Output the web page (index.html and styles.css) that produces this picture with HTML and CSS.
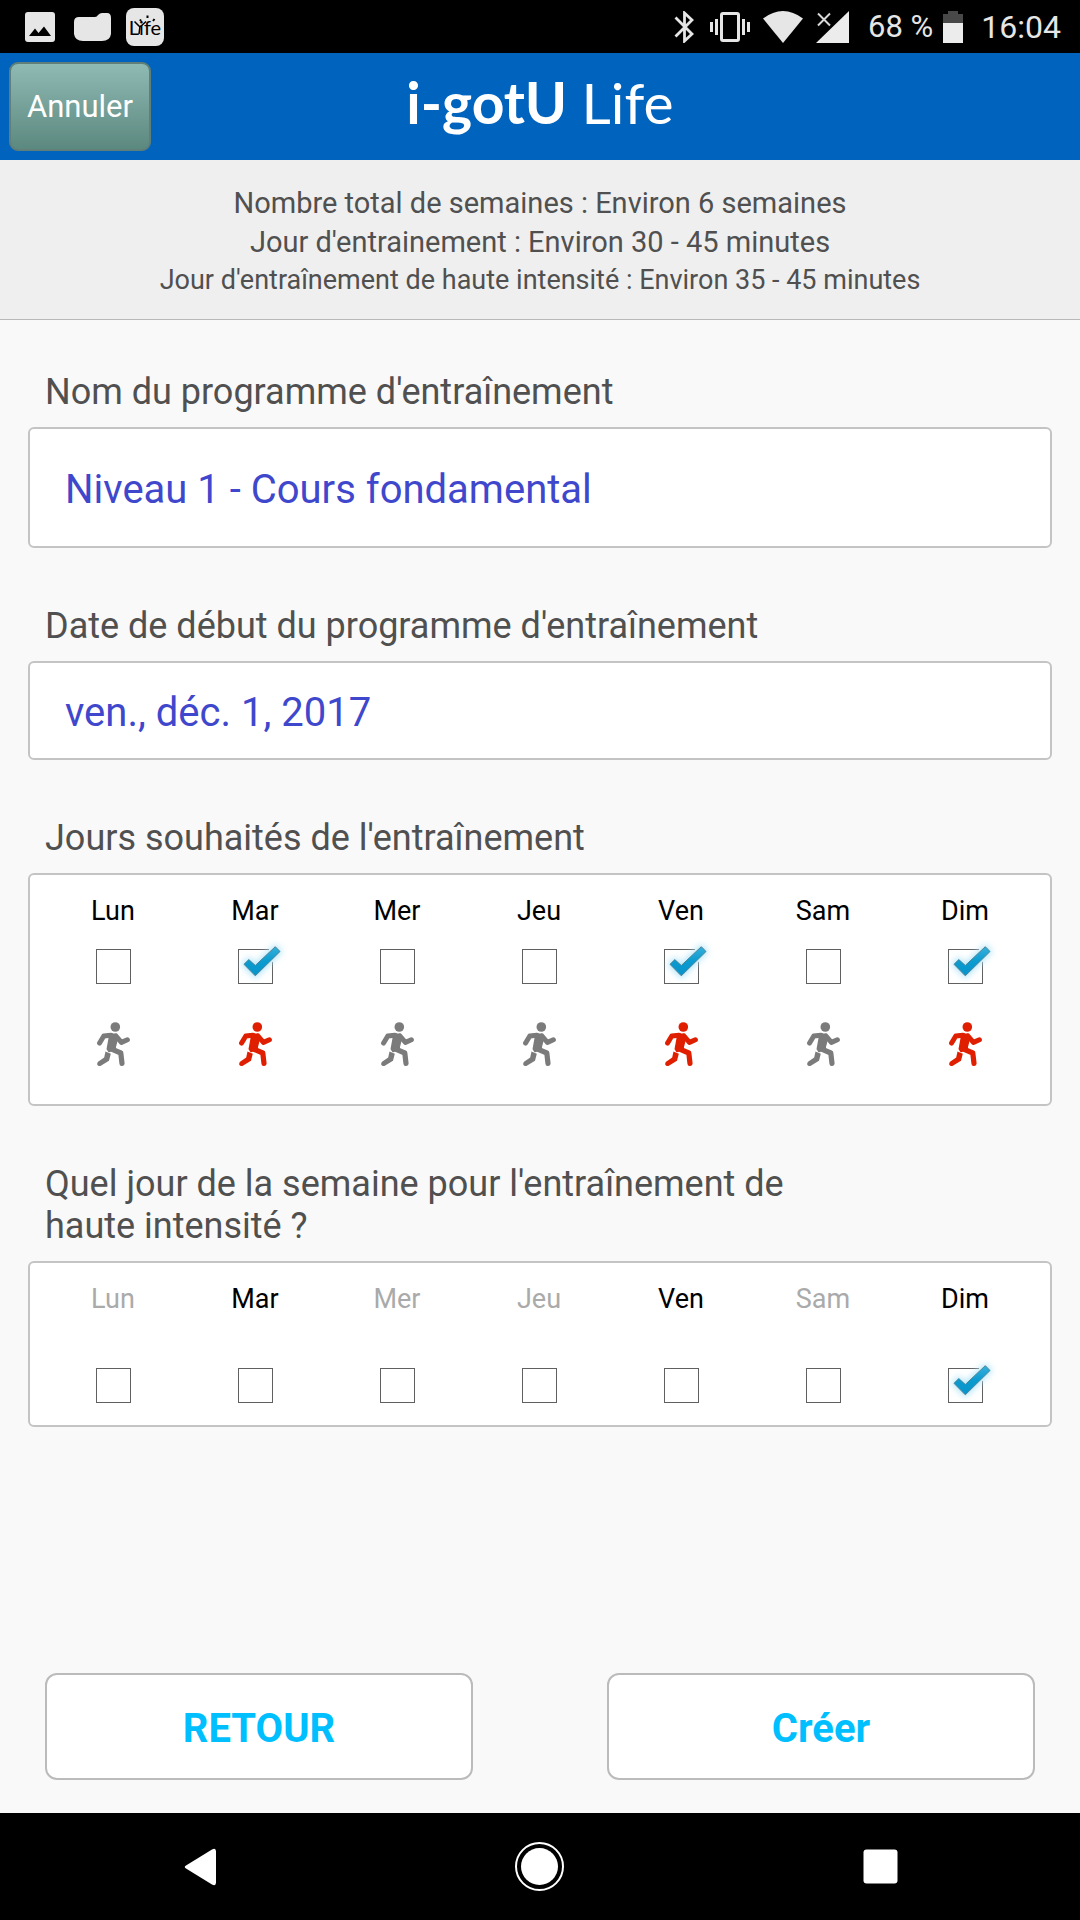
FILE: index.html
```html
<!DOCTYPE html>
<html lang="fr">
<head>
    <meta charset="UTF-8">
    <meta name="viewport" content="width=device-width, initial-scale=1.0">
    <title>i-gotU Life</title>
    <link rel="stylesheet" href="styles.css">
</head>
<body>
    <svg class="symbols" aria-hidden="true">
        <defs>
            <linearGradient id="tick-fill" x1="0" y1="0" x2="0" y2="1">
                <stop offset="0" stop-color="#35b0dc"/>
                <stop offset="0.5" stop-color="#0a9bd0"/>
                <stop offset="1" stop-color="#0893cb"/>
            </linearGradient>
            <filter id="glow" x="-50%" y="-50%" width="200%" height="200%">
                <feGaussianBlur stdDeviation="3"/>
            </filter>
        </defs>
        <symbol id="tick" viewBox="-12 -12 66 52">
            <path d="M31 -2 37 -5 45 2 37 15 31 10z" fill="#fff"/>
            <path d="M6 15.3 10.8 10.6 17.3 16.5 37.3 -2.3 42 2.5 17.3 26.8z" fill="#a8e0f7" stroke="#b9e7f9" stroke-width="4" filter="url(#glow)"/>
            <path d="M6 15.3 10.8 10.6 17.3 16.5 37.3 -2.3 42 2.5 17.3 26.8z" fill="url(#tick-fill)" stroke="#4b8396"/>
        </symbol>
        <symbol id="runner" viewBox="0 0 33 44">
            <circle cx="18.3" cy="5" r="4.8" fill="currentColor"/>
            <path d="M11 12.2 18.500 12.2 21 14.5 18.2 25 18.500 27 12 29.500 10.3 27 12.500 15z" fill="currentColor" stroke="currentColor" stroke-width="1.500" stroke-linejoin="round"/>
            <path d="M2.6 21 6.8 14 14 13.2M19 14 24.4 20.4 30.4 17.8" fill="none" stroke="currentColor" stroke-width="5" stroke-linecap="round" stroke-linejoin="round"/>
            <path d="M13.500 26.6 23.8 31 25 41.4" fill="none" stroke="currentColor" stroke-width="5.2" stroke-linecap="round" stroke-linejoin="round"/>
            <path d="M8.500 29.500 13.8 31.8 12 38.8 3.8 43.8Q1 44.6 .2 42.6 0 40.500 1.4 39.500L7.2 35.4z" fill="currentColor"/>
        </symbol>
    </svg>

    <div class="status-bar">
        <div class="status-group">
            <svg class="icon-picture" width="30" height="30" viewBox="0 0 30 30">
                <rect width="30" height="30" rx="3" fill="#e6e6e6"/>
                <path d="M4 24 10 16.5 13.5 21 19 14.5 26 24z" fill="#000"/>
            </svg>
            <svg width="37" height="28" viewBox="0 0 37 28">
                <path d="M5 4H21Q23 4 24 2 26 0 28 0H33Q37 0 37 5V21Q36 28 28 28H9Q1 28 0 21V9Q0 4 5 4z" fill="#e6e6e6"/>
            </svg>
            <span class="app-badge">Life
                <svg class="badge-rays" width="38" height="38" viewBox="0 0 38 38">
                    <path d="M8.500 13.500 14 19 20 13.500M14 18 13 26" fill="none" stroke="#000" stroke-width="1.500"/>
                    <path d="M14 11.500 15 13M21.500 7.500V10M28.500 11 27 13" stroke="#000" stroke-width="2"/>
                </svg>
            </span>
        </div>
        <div class="status-group status-right">
            <svg class="icon-bluetooth" width="20" height="32" viewBox="0 0 20 32">
                <path d="M1.5 6.5 18 23 10.5 30V2L18 9 1.5 25.5" fill="none" stroke="#e6e6e6" stroke-width="2.8"/>
            </svg>
            <svg class="icon-vibrate" width="40" height="30" viewBox="0 0 40 30">
                <rect x="11.5" y="1.5" width="17" height="27" rx="1.5" fill="none" stroke="#e6e6e6" stroke-width="3"/>
                <path d="M1.5 10V20M6.5 7V23M33.5 7V23M38.5 10V20" stroke="#e6e6e6" stroke-width="3"/>
            </svg>
            <svg width="40" height="32" viewBox="0 0 40 32">
                <path d="M0 7.5Q20 -7.5 40 7.5L20 32z" fill="#e6e6e6"/>
            </svg>
            <svg class="icon-signal" width="33" height="32" viewBox="0 0 33 32">
                <path d="M33 0V32H0z" fill="#ececec"/>
                <path d="M2 2.5 14 14.5M14 2.5 2 14.5" stroke="#d8d8d8" stroke-width="2"/>
            </svg>
            <span class="battery-level">68 %</span>
            <svg class="icon-battery" width="20" height="32" viewBox="0 0 20 32">
                <path d="M5 0H15V3H20V12H0V3H5z" fill="#484848"/>
                <path d="M0 12H20V32H0z" fill="#ececec"/>
            </svg>
            <span class="clock">16:04</span>
        </div>
    </div>

    <header class="app-header">
        <button type="button" class="cancel-btn">Annuler</button>
        <h1 class="logo"><b>i-gotU</b> Life</h1>
    </header>

    <section class="summary">
        <p>Nombre total de semaines : Environ 6 semaines</p>
        <p>Jour d'entrainement : Environ 30 - 45 minutes</p>
        <p class="small">Jour d'entraînement de haute intensité : Environ 35 - 45 minutes</p>
    </section>

    <form class="program-form">
        <div class="field">
            <label class="field-label" for="program-name">Nom du programme d'entraînement</label>
            <input class="box text-input tall" type="text" id="program-name" value="Niveau 1 - Cours fondamental">
        </div>

        <div class="field">
            <label class="field-label" for="start-date">Date de début du programme d'entraînement</label>
            <input class="box text-input" type="text" id="start-date" value="ven., déc. 1, 2017">
        </div>

        <div class="field" role="group" aria-labelledby="days-label">
            <div class="field-label" id="days-label">Jours souhaités de l'entraînement</div>
            <div class="box days">
                <label class="day"><span>Lun</span><span class="check"><input type="checkbox"><svg class="tick"><use href="#tick"/></svg></span><svg class="runner"><use href="#runner"/></svg></label>
                <label class="day"><span>Mar</span><span class="check"><input type="checkbox" checked><svg class="tick"><use href="#tick"/></svg></span><svg class="runner"><use href="#runner"/></svg></label>
                <label class="day"><span>Mer</span><span class="check"><input type="checkbox"><svg class="tick"><use href="#tick"/></svg></span><svg class="runner"><use href="#runner"/></svg></label>
                <label class="day"><span>Jeu</span><span class="check"><input type="checkbox"><svg class="tick"><use href="#tick"/></svg></span><svg class="runner"><use href="#runner"/></svg></label>
                <label class="day"><span>Ven</span><span class="check"><input type="checkbox" checked><svg class="tick"><use href="#tick"/></svg></span><svg class="runner"><use href="#runner"/></svg></label>
                <label class="day"><span>Sam</span><span class="check"><input type="checkbox"><svg class="tick"><use href="#tick"/></svg></span><svg class="runner"><use href="#runner"/></svg></label>
                <label class="day"><span>Dim</span><span class="check"><input type="checkbox" checked><svg class="tick"><use href="#tick"/></svg></span><svg class="runner"><use href="#runner"/></svg></label>
            </div>
        </div>

        <div class="field" role="group" aria-labelledby="intense-label">
            <div class="field-label" id="intense-label">Quel jour de la semaine pour l'entraînement de haute intensité ?</div>
            <div class="box days intense">
                <label class="day off"><span>Lun</span><span class="check"><input type="checkbox" disabled><svg class="tick"><use href="#tick"/></svg></span></label>
                <label class="day"><span>Mar</span><span class="check"><input type="checkbox"><svg class="tick"><use href="#tick"/></svg></span></label>
                <label class="day off"><span>Mer</span><span class="check"><input type="checkbox" disabled><svg class="tick"><use href="#tick"/></svg></span></label>
                <label class="day off"><span>Jeu</span><span class="check"><input type="checkbox" disabled><svg class="tick"><use href="#tick"/></svg></span></label>
                <label class="day"><span>Ven</span><span class="check"><input type="checkbox"><svg class="tick"><use href="#tick"/></svg></span></label>
                <label class="day off"><span>Sam</span><span class="check"><input type="checkbox" disabled><svg class="tick"><use href="#tick"/></svg></span></label>
                <label class="day"><span>Dim</span><span class="check"><input type="checkbox" checked><svg class="tick"><use href="#tick"/></svg></span></label>
            </div>
        </div>

        <div class="actions">
            <button type="button" class="action-btn">RETOUR</button>
            <button type="button" class="action-btn">Créer</button>
        </div>
    </form>

    <nav class="nav-bar">
        <button type="button" aria-label="Retour">
            <svg width="50" height="50" viewBox="0 0 50 50"><path d="M12 23.5 38 7.500Q42 5.500 42 9.500V40.500Q42 44.500 38 42.500L12 26.500Q9.500 25 12 23.500z" fill="#fff"/></svg>
        </button>
        <button type="button" aria-label="Accueil">
            <svg width="50" height="50" viewBox="0 0 50 50"><circle cx="24.5" cy="24.5" r="23.500" fill="none" stroke="#fff" stroke-width="2"/><circle cx="24.5" cy="24.5" r="18.500" fill="#fff"/></svg>
        </button>
        <button type="button" aria-label="Applications récentes">
            <svg width="50" height="50" viewBox="0 0 50 50"><rect x="7.5" y="7.500" width="34" height="34" rx="3" fill="#fff"/></svg>
        </button>
    </nav>
</body>
</html>
```
FILE: styles.css
```css
* {
    box-sizing: border-box;
}
body {
    margin: 0;
    min-height: 100vh;
    display: flex;
    flex-direction: column;
    background: #f9f9f9;
    font-family: Roboto, sans-serif;
    color: #505050;
}
button, input {
    font-family: inherit;
    margin: 0;
}
.symbols {
    position: absolute;
    width: 0;
    height: 0;
}

/* status bar */
.status-bar {
    display: flex;
    justify-content: space-between;
    height: 53px;
    padding: 0 19px 0 25px;
    background: #000;
    color: #e6e6e6;
    font-size: 31px;
}
.status-group {
    display: flex;
    align-items: center;
    gap: 13px;
}
.icon-picture {
    margin-right: 6px;
}
.app-badge {
    position: relative;
    width: 38px;
    height: 38px;
    margin-left: 2px;
    border-radius: 8px;
    background: #e6e6e6;
    color: #000;
    font: 20px/38px Lato, sans-serif;
    text-align: center;
}
.badge-rays {
    position: absolute;
    left: 0;
    top: 0;
}
.icon-bluetooth {
    margin-right: 3px;
}
.battery-level {
    margin-left: 6px;
}
.icon-battery {
    margin-left: -3px;
}
.clock {
    margin-left: 5px;
    font-size: 32px;
}

/* header */
.app-header {
    display: grid;
    grid-template-columns: 1fr auto 1fr;
    align-items: center;
    height: 107px;
    padding: 0 9px;
    background: #0063bd;
}
.cancel-btn {
    justify-self: start;
    width: 142px;
    height: 89px;
    padding: 0;
    border: 2px solid #5f7f78;
    border-radius: 9px;
    background: linear-gradient(#8fbab4, #5b887f);
    color: #fff;
    font-size: 31px;
}
.logo {
    margin: 0;
    padding-bottom: 10px;
    color: #fff;
    font: 57px/80px Lato, sans-serif;
}

/* summary */
.summary {
    height: 160px;
    padding-top: 24px;
    border-bottom: 1px solid #b8b8b8;
    background: #efefef;
    text-align: center;
    font-size: 29px;
    line-height: 39px;
}
.summary p {
    margin: 0;
}
.summary .small {
    font-size: 27px;
    line-height: 36px;
}

/* form */
.program-form {
    flex: 1;
    display: flex;
    flex-direction: column;
    gap: 57px;
    padding: 51px 28px 33px;
}
.field {
    display: flex;
    flex-direction: column;
    gap: 14px;
}
.field-label {
    max-width: 80%;
    padding-left: 17px;
    font-size: 36px;
    line-height: 42px;
}
.box {
    width: 100%;
    border: 2px solid #c4c4c4;
    border-radius: 6px;
    background: #fff;
}
.text-input {
    height: 99px;
    padding: 4px 35px 0;
    color: #3f48cc;
    font-size: 40px;
}
.text-input.tall {
    height: 121px;
}
.days {
    display: grid;
    grid-template-columns: repeat(7, 1fr);
    padding: 20px 14px 38px 12px;
}
.days.intense {
    padding-bottom: 22px;
}
.day {
    display: flex;
    flex-direction: column;
    align-items: center;
    color: #000;
    font-size: 27px;
    line-height: 32px;
}
.day.off {
    color: #aaa;
}
.check {
    position: relative;
    width: 35px;
    height: 35px;
    margin-top: 22px;
}
.intense .check {
    margin-top: 53px;
}
.check input {
    appearance: none;
    display: block;
    width: 35px;
    height: 35px;
    border: 1px solid #606060;
    background: #fff;
}
.tick {
    display: none;
    position: absolute;
    left: -12px;
    top: -12px;
    width: 66px;
    height: 52px;
    pointer-events: none;
}
.check input:checked + .tick {
    display: block;
}
.runner {
    width: 33px;
    height: 44px;
    margin-top: 38px;
    color: #7b7b7b;
}
.check:has(input:checked) + .runner {
    color: #df1f00;
}

/* bottom buttons */
.actions {
    display: flex;
    justify-content: space-between;
    gap: 24px;
    margin-top: auto;
    padding: 0 17px;
}
.action-btn {
    flex: 0 1 428px;
    height: 107px;
    padding: 4px 0 0;
    border: 2px solid #bbb;
    border-radius: 12px;
    background: #fff;
    color: #00bfff;
    font-size: 40px;
    font-weight: bold;
}

/* navigation bar */
.nav-bar {
    display: flex;
    justify-content: center;
    height: 107px;
    background: #000;
}
.nav-bar button {
    flex: 0 1 341px;
    display: flex;
    justify-content: center;
    align-items: center;
    padding: 0;
    border: none;
    background: none;
}
```
